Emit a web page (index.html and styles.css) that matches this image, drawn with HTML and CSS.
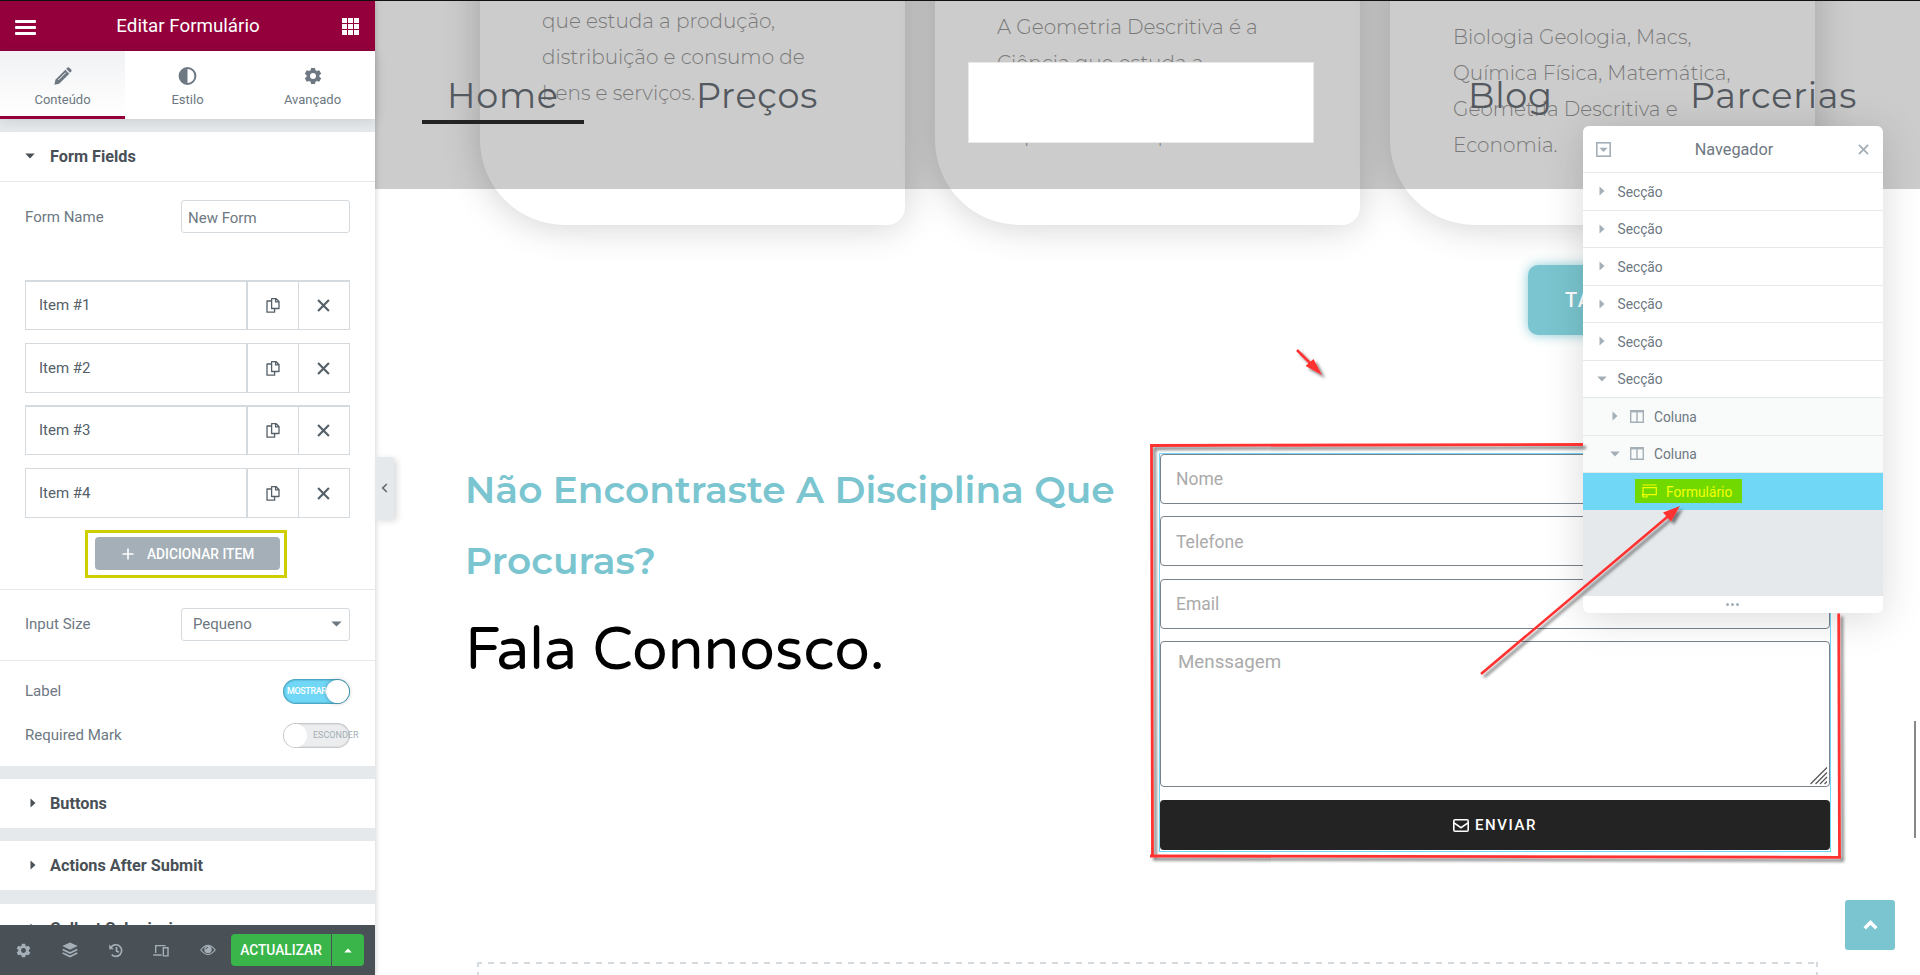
FILE: index.html
```html
<!DOCTYPE html>
<html lang="pt">
<head>
<meta charset="utf-8">
<title>Editar Formulário</title>
<link rel="stylesheet" href="styles.css">
</head>
<body>
<svg class="sprite" aria-hidden="true">
  <symbol id="copy" viewBox="0 0 14 15"><path d="M5.6.7h4.6l2.8 2.8v7H5.6zM9.6.7v3.2H13M5.4 3H1v11.2h7.6v-3.4" fill="none" stroke="currentColor" stroke-width="1.3" stroke-linejoin="round"/></symbol>
  <symbol id="cross" viewBox="0 0 12 12"><path d="M1 1l10 10M11 1L1 11" fill="none" stroke="currentColor" stroke-width="2"/></symbol>
  <symbol id="right" viewBox="0 0 6 10"><path d="M.5.5L5.5 5l-5 4.500z" fill="currentColor"/></symbol>
  <symbol id="down" viewBox="0 0 10 6"><path d="M.3.5h9.400L5 5.600z" fill="currentColor"/></symbol>
  <symbol id="cog" viewBox="0 0 20 20"><path fill-rule="evenodd" fill="currentColor" d="M7.800 1h4.400l.5 2.500 1.700 1 2.500-.9 2.200 3.800-2 1.700v1.800l2 1.700-2.200 3.800-2.500-.9-1.700 1-.5 2.500H7.800l-.5-2.500-1.700-1-2.500.9L.9 12.600l2-1.700V9.100l-2-1.700 2.200-3.800 2.500.9 1.700-1zM10 6.700a3.300 3.300 0 1 0 0 6.600 3.300 3.300 0 0 0 0-6.600z"/></symbol>
  <symbol id="column" viewBox="0 0 14 13"><path d="M.7 1.500h12.600M.7 1v11.300h12.600V1M7 2v10.400" fill="none" stroke="currentColor" stroke-width="1.400"/><path d="M0 0h14v2.200H0z" fill="currentColor"/></symbol>
</svg>

<div class="editor">
  <aside class="panel">
    <header class="panel-header">
      <span class="burger"><i></i><i></i><i></i></span>
      <h1>Editar Formulário</h1>
      <span class="apps"><i></i><i></i><i></i><i></i><i></i><i></i><i></i><i></i><i></i></span>
    </header>
    <nav class="tabs">
      <div class="tab active">
        <svg width="18" height="18" viewBox="0 0 18 18"><path fill="currentColor" d="M12.200 1.800l1-1.100q1-1 2.100 0l1.900 1.900q.9 1-.1 2.100l-1.100 1zM11.300 2.700l4 4L5.200 16.700.4 17.700l1-4.900z"/><path d="M4.300 13l7.400-7.400" stroke="#f7f8f9" stroke-width="1"/></svg>
        <span>Conteúdo</span>
      </div>
      <div class="tab">
        <svg width="19" height="18" viewBox="0 0 19 18"><circle cx="9.500" cy="9" r="7.900" fill="none" stroke="currentColor" stroke-width="2"/><path d="M9.500 1a8 8 0 0 0 0 16z" fill="currentColor"/></svg>
        <span>Estilo</span>
      </div>
      <div class="tab">
        <svg width="18" height="18"><use href="#cog"/></svg>
        <span>Avançado</span>
      </div>
    </nav>
    <div class="panel-body">
      <section class="group">
        <h2 class="open"><svg width="10" height="6"><use href="#down"/></svg>Form Fields</h2>
        <div class="control name"><label>Form Name</label><div class="field">New Form</div></div>
        <div class="items">
          <div class="item thick"><span>Item #1</span><b><svg width="14" height="15"><use href="#copy"/></svg></b><b><svg width="13" height="13" viewBox="0 0 12 12"><use href="#cross"/></svg></b></div>
          <div class="item"><span>Item #2</span><b><svg width="14" height="15"><use href="#copy"/></svg></b><b><svg width="13" height="13" viewBox="0 0 12 12"><use href="#cross"/></svg></b></div>
          <div class="item thick third"><span>Item #3</span><b><svg width="14" height="15"><use href="#copy"/></svg></b><b><svg width="13" height="13" viewBox="0 0 12 12"><use href="#cross"/></svg></b></div>
          <div class="item"><span>Item #4</span><b><svg width="14" height="15"><use href="#copy"/></svg></b><b><svg width="13" height="13" viewBox="0 0 12 12"><use href="#cross"/></svg></b></div>
        </div>
        <div class="add-frame"><div class="add"><svg width="12" height="12" viewBox="0 0 12 12"><path d="M6 .5v11M.5 6h11" stroke="#fff" stroke-width="1.600"/></svg>ADICIONAR ITEM</div></div>
        <div class="control size"><label>Input Size</label><div class="field select">Pequeno<svg width="11" height="6" viewBox="0 0 10 6" preserveAspectRatio="none"><use href="#down"/></svg></div></div>
        <div class="toggles">
          <div class="control"><label>Label</label><div class="switch on"><em>MOSTRAR</em><i></i></div></div>
          <div class="control"><label>Required Mark</label><div class="switch"><i></i><em>ESCONDER</em></div></div>
        </div>
      </section>
      <section class="group"><h2><svg width="6" height="10"><use href="#right"/></svg>Buttons</h2></section>
      <section class="group"><h2><svg width="6" height="10"><use href="#right"/></svg>Actions After Submit</h2></section>
      <section class="group last"><h2><svg width="6" height="10"><use href="#right"/></svg>Collect Submissions</h2></section>
    </div>
    <footer class="panel-footer">
      <div class="tools">
        <svg width="15" height="15"><use href="#cog"/></svg>
        <svg width="16" height="16" viewBox="0 0 16 16"><path fill="currentColor" d="M8 .5l7.700 3.600L8 7.700.3 4.100z"/><path d="M.7 7.500L8 11l7.300-3.500M.7 11L8 14.500l7.300-3.500" fill="none" stroke="currentColor" stroke-width="1.700"/></svg>
        <svg width="14" height="15" viewBox="0 0 14 15"><path d="M1.900 4.600A5.800 5.800 0 1 1 2.700 11.600M7.500 4v4l2.400 1.300" fill="none" stroke="currentColor" stroke-width="1.700"/><path d="M.2 1.500v4.700h4.700z" fill="currentColor"/></svg>
        <svg width="16" height="13" viewBox="0 0 16 13"><path d="M2.700 9V1.600h9.800M.3 11h8.300M10.300 3.700h4.700v8.200h-4.700z" fill="none" stroke="currentColor" stroke-width="1.400"/></svg>
        <svg width="16" height="12" viewBox="0 0 16 12"><path d="M.8 6Q8-3.500 15.200 6 8 15 .8 6z" fill="none" stroke="currentColor" stroke-width="1.200"/><circle cx="8" cy="5.500" r="3.700" fill="currentColor"/><path d="M6 5.200a2 2 0 0 1 1.900-1.800" fill="none" stroke="#495157"/></svg>
      </div>
      <div class="update"><span>ACTUALIZAR</span><b><svg class="flip" width="8" height="5" viewBox="0 0 10 6"><use href="#down"/></svg></b></div>
    </footer>
    <div class="collapse"><svg width="7" height="10" viewBox="0 0 7 10"><path d="M5.800 1L1.800 5l4 4" fill="none" stroke="#5f6a73" stroke-width="1.700"/></svg></div>
  </aside>

  <main class="preview">
    <div class="cards">
      <article class="card"><p>que estuda a produção,<br>distribuição e consumo de<br>bens e serviços.</p></article>
      <article class="card second"><p>A Geometria Descritiva é a<br>Ciência que estuda a<br>&nbsp;<br>duplo e num só plano</p></article>
      <article class="card third"><p>Biologia Geologia, Macs,<br>Química Física, Matemática,<br>Geometria Descritiva e<br>Economia.</p></article>
    </div>
    <nav class="site-nav">
      <a class="home">Home</a><a class="precos">Preços</a><span class="logo"></span><a class="blog">Blog</a><a class="parcerias">Parcerias</a>
    </nav>
    <div class="cta-row"><a class="cta">TABELA DE PREÇOS</a></div>
    <div class="contact">
      <div class="copy">
        <h2>Não Encontraste A Disciplina Que<br>Procuras?</h2>
        <h3>Fala Connosco.</h3>
      </div>
      <form class="form">
        <input placeholder="Nome"><input class="phone" placeholder="Telefone"><input class="email" placeholder="Email">
        <div class="message"><textarea placeholder="Menssagem"></textarea>
          <svg width="18" height="18" viewBox="0 0 18 18"><path d="M.5 17L17 .5M5.500 17L17 5.500M10 17l7-7M14.500 17l2.500-2.500" stroke="#555" stroke-width="1.200"/></svg>
        </div>
        <button type="button"><svg width="16" height="13" viewBox="0 0 16 13"><rect x=".8" y=".8" width="14.400" height="11.400" rx="1.300" fill="none" stroke="#fff" stroke-width="1.600"/><path d="M1 3.800l7 4.900 7-4.900" fill="none" stroke="#fff" stroke-width="1.600"/></svg>ENVIAR</button>
      </form>
    </div>
    <div class="drop-area"></div>
    <div class="to-top"><svg width="15" height="10" viewBox="0 0 15 10"><path d="M1.700 8.300l5.800-5.800 5.800 5.800" fill="none" stroke="#fff" stroke-width="3.400"/></svg></div>
    <div class="scroll-thumb"></div>
  </main>
</div>

<div class="navigator">
  <header><svg width="15" height="15" viewBox="0 0 15 15"><rect x=".8" y=".8" width="13.400" height="13.400" fill="none" stroke="currentColor" stroke-width="1.600"/><path d="M3.300 5.700h8.400L7.500 10z" fill="currentColor"/></svg><span>Navegador</span><svg width="11" height="11" viewBox="0 0 12 12"><use href="#cross"/></svg></header>
  <div class="row"><svg width="6" height="10"><use href="#right"/></svg><span>Secção</span></div>
  <div class="row"><svg width="6" height="10"><use href="#right"/></svg><span>Secção</span></div>
  <div class="row"><svg width="6" height="10"><use href="#right"/></svg><span>Secção</span></div>
  <div class="row"><svg width="6" height="10"><use href="#right"/></svg><span>Secção</span></div>
  <div class="row"><svg width="6" height="10"><use href="#right"/></svg><span>Secção</span></div>
  <div class="row wide"><svg width="10" height="6"><use href="#down"/></svg><span>Secção</span></div>
  <div class="row child"><svg width="6" height="10"><use href="#right"/></svg><svg class="col" width="14" height="13"><use href="#column"/></svg><span>Coluna</span></div>
  <div class="row child wide"><svg width="10" height="6"><use href="#down"/></svg><svg class="col" width="14" height="13"><use href="#column"/></svg><span>Coluna</span></div>
  <div class="selected"><div class="mark"><svg width="15" height="14" viewBox="0 0 15 14"><path d="M.5 1h14M1 13V3.700h13.300v7H6M.5 10.700H5V13H1z" fill="none" stroke="currentColor" stroke-width="1.200"/></svg><span>Formulário</span></div></div>
  <div class="empty"></div>
  <footer><i></i><i></i><i></i></footer>
</div>

<svg class="annotations" width="1920" height="975" viewBox="0 0 1920 975">
  <defs><filter id="soft" x="-5%" y="-5%" width="110%" height="110%"><feDropShadow dx="3" dy="3" stdDeviation="1.500" flood-color="#000" flood-opacity=".5"/></filter></defs>
  <g filter="url(#soft)" stroke="#ff3333" fill="#ff3333">
    <path d="M1150 445.500L1583 444.500M1151.500 447L1152.500 857M1150 856L1841 857.300M1838.700 613.500L1839.500 857" stroke-width="2.800" fill="none"/>
    <path d="M1481 674L1669 515.500M1297 350l14 14" stroke-width="2.600" fill="none"/>
    <path d="M1680 506l-17 6.500 8 9zM1322 375l-16.500-9 8-7z" stroke="none"/>
  </g>
</svg>
</body>
</html>
```
FILE: styles.css
```css
* { box-sizing: border-box; }
body { margin: 0; width: 1920px; height: 975px; overflow: hidden; position: relative; background: #fff; font-family: Roboto, "Liberation Sans", sans-serif; }
h1, h2, h3, p { margin: 0; }
svg { display: block; flex: none; }
.sprite { position: absolute; width: 0; height: 0; }
.editor { display: flex; height: 975px; border-top: 1px solid #111; }

/* editor panel */
.panel { width: 375px; flex: none; position: relative; z-index: 3; display: flex; flex-direction: column; background: #e6e9ec; box-shadow: 0 0 6px rgba(0,0,0,.22); }
.panel-header { height: 50px; flex: none; background: #93003c; display: flex; align-items: center; justify-content: space-between; padding: 0 15px; color: #fff; }
.panel-header h1 { font-size: 18.75px; font-weight: 400; padding-right: 2px; }
.burger { display: flex; flex-direction: column; gap: 3px; width: 21px; margin-top: 2px; }
.burger i { height: 3px; background: #fff; border-radius: 1px; }
.apps { display: grid; grid-template-columns: repeat(3, 5px); gap: 1px; width: 18px; }
.apps i { width: 5px; height: 5px; background: #fff; }
.tabs { height: 68px; flex: none; display: flex; background: #fff; box-shadow: 0 2px 12px rgba(0,0,0,.12); color: #6d7882; font-size: 13px; }
.tab { flex: 1; display: flex; flex-direction: column; align-items: center; padding-top: 16px; gap: 6px; border-bottom: 3px solid transparent; line-height: 17px; }
.tab.active { background: linear-gradient(#f1f2f4, #fff); border-bottom-color: #93003c; }
.panel-body { flex: 1; overflow: hidden; padding-top: 13px; }
.group { background: #fff; margin-bottom: 13px; overflow: hidden; }
.group.last { margin-top: 14px; }
.group h2 { height: 49px; display: flex; align-items: center; padding: 0 0 1px 30px; gap: 14px; font-size: 16.25px; font-weight: 700; color: #495157; }
.group h2.open { height: 50px; padding-left: 25px; gap: 15px; border-bottom: 1px solid #e6e9ec; }
.control { display: flex; justify-content: space-between; align-items: center; padding: 0 25px; color: #6d7882; font-size: 15px; }
.field { width: 169px; height: 33px; border: 1px solid #d5dadf; border-radius: 3px; padding: 2px 6px 0; line-height: 30px; }
.name { margin-top: 18px; }
.name label { padding-top: 1px; }
.items { margin: 47px 25px 0; display: flex; flex-direction: column; gap: 13px; }
.item { height: 50px; border: 1px solid #d5dadf; display: flex; color: #556068; font-size: 15px; }
.item.thick { border-top-width: 2px; }
.item.third { margin-top: -1px; }
.item span { flex: 1; padding-left: 13px; line-height: 49px; }
.item.thick span { line-height: 46px; }
.item b { width: 52px; border-left: 2px solid #d5dadf; display: flex; align-items: center; justify-content: center; padding-right: 1px; }
.item b + b { width: 51px; border-left-width: 1px; }
.add-frame { width: 202px; height: 48px; margin: 12px 0 0 85px; border: 3px solid #cfcf00; padding: 4px 4px 0 7px; }
.add { height: 33px; background: #a4afb7; border-radius: 4px; color: #fff; font-size: 13.75px; font-weight: 500; display: flex; align-items: center; gap: 13px; padding: 0 0 0 27px; }
.size { margin-top: 11px; height: 72px; border-top: 1px solid #e6e9ec; border-bottom: 1px solid #e6e9ec; align-items: flex-start; padding-top: 18px; line-height: 32px; }
.select { padding: 0 7px 1px 11px; display: flex; justify-content: space-between; align-items: center; }
.toggles { padding: 18px 0; display: flex; flex-direction: column; gap: 19px; height: 105px; }
.toggles .control { height: 25px; }
.toggles label { padding-bottom: 2px; }
.switch { width: 67px; height: 25px; border-radius: 13px; background: #ebedee; box-shadow: inset 0 0 2px 1px rgba(0,0,0,.2); display: flex; align-items: center; color: #a4afb7; font-size: 9px; }
.switch em { font-style: normal; white-space: nowrap; padding-bottom: 1px; }
.switch i { width: 23px; height: 23px; border-radius: 50%; background: #fff; margin: 0 6px 0 1px; flex: none; }
.switch.on { background: #71d7f7; color: #fff; font-weight: 500; padding-left: 4px; letter-spacing: -.4px; box-shadow: inset 0 0 2px 1px rgba(0,70,90,.45); }
.switch.on em { width: 39px; overflow: hidden; }
.switch.on i { margin: 0; box-shadow: 0 0 4px rgba(0,0,0,.3); }
.panel-footer { height: 50px; flex: none; background: #495157; display: flex; justify-content: space-between; align-items: center; padding: 0 11px 0 16px; color: #a4afb7; }
.tools { width: 200px; display: flex; justify-content: space-between; align-items: center; }
.update { display: flex; width: 133px; height: 32px; background: #39b54a; border-radius: 4px; color: #fff; font-size: 13.75px; font-weight: 500; line-height: 32px; text-align: center; }
.update span { flex: 1; }
.update b { width: 33px; border-left: 1px solid #495157; display: flex; align-items: center; justify-content: center; }
.flip { transform: rotate(180deg); }
.collapse { position: absolute; left: 375px; top: 456px; width: 19px; height: 62px; background: #e6e9ec; border-radius: 0 3px 3px 0; box-shadow: 3px 2px 6px rgba(0,0,0,.15); display: flex; align-items: center; justify-content: center; }

/* page preview */
.preview { flex: 1; position: relative; height: 974px; overflow: hidden; }
.cards { display: flex; gap: 30px; height: 224px; padding-left: 105px; }
.card { width: 425px; flex: none; height: 324px; margin-top: -100px; padding: 102px 0 0 62px; background: #fff; border-radius: 20px 20px 18px 85px; box-shadow: 0 0 38px rgba(0,0,0,.2); font: 300 20px/36px Montserrat, Inter, "Open Sans", sans-serif; color: #989898; white-space: nowrap; }
.card.second { padding-top: 108px; }
.card.third { padding: 118px 0 0 63px; }
.site-nav { position: absolute; left: 0; top: 0; width: 1545px; height: 188px; background: rgba(0,0,0,.2); display: flex; font: 400 35px/50px Montserrat, Inter, "Open Sans", sans-serif; letter-spacing: .75px; color: #54595f; padding: 61px 0 0 47px; }
.site-nav a { height: 62px; padding-top: 9px; flex: none; white-space: nowrap; }
.site-nav .home { width: 162px; border-bottom: 4px solid #232323; padding-left: 25px; }
.site-nav .precos { width: 384px; padding-left: 112px; }
.logo { width: 346px; height: 81px; flex: none; background: #fff; border: 1px solid #e8e8e8; }
.site-nav .blog { width: 376px; padding-left: 154px; }
.cta-row { padding: 40px 0 0 1153px; height: 110px; }
.cta { display: block; width: 286px; height: 70px; border-radius: 10px; background: #7ac5cf; box-shadow: 0 0 12px rgba(122,197,207,.9); color: #fff; font: 500 20px/71px Roboto, sans-serif; letter-spacing: 1.500px; padding-left: 37px; white-space: nowrap; }
.contact { display: flex; justify-content: space-between; padding: 118px 89px 0 90px; height: 517px; }
.copy { padding-top: 1px; }
.copy h2 { font: 600 37.500px/71px Montserrat, Inter, "Open Sans", sans-serif; color: #7ac5cf; white-space: nowrap; }
.copy h3 { font: 400 58.750px/80px "Varela Round", Lato, sans-serif; color: #000; margin-top: 15px; }
.form { width: 672px; height: 399px; border: 1px solid #71d7f7; display: flex; flex-direction: column; gap: 12px; }
.form input, .form textarea { width: 670px; height: 50px; flex: none; border: 1px solid #7a828a; border-radius: 4px; background: #fff; font: 400 17.500px Roboto, sans-serif; padding: 0 15px; margin: 0; outline: 0; display: block; }
.form .phone { padding-top: 2px; }
.form .email { margin-top: 1px; }
.form textarea { height: 146px; padding: 9px 17px; resize: none; font-size: 18.750px; }
.form ::placeholder { color: #aaa; opacity: 1; }
.message { position: relative; height: 146px; flex: none; }
.message svg { position: absolute; right: 2px; bottom: 2px; }
.form button { height: 50px; margin-top: 1px; border: 0; border-radius: 4px; background: #232323; color: #fff; font: 500 15px Roboto, sans-serif; letter-spacing: 1.600px; display: flex; align-items: center; justify-content: center; gap: 6px; flex: none; }
.drop-area { margin: 110px 0 0 102px; width: 1341px; height: 60px; background: repeating-linear-gradient(90deg, #d5dadf 0 6px, transparent 6px 12px) -1px 0 / 1341px 2px no-repeat, repeating-linear-gradient(#d5dadf 0 5px, transparent 5px 10px) 0 0 / 2px 60px no-repeat, repeating-linear-gradient(#d5dadf 0 5px, transparent 5px 10px) 100% 0 / 2px 60px no-repeat; }
.to-top { position: absolute; left: 1470px; top: 899px; width: 50px; height: 50px; background: #7ac5cf; border-radius: 3px; display: flex; align-items: center; justify-content: center; }
.scroll-thumb { position: absolute; left: 1539px; top: 720px; width: 2px; height: 117px; background: #888; }

/* floating navigator */
.navigator { position: absolute; left: 1583px; top: 126px; width: 300px; height: 487px; z-index: 5; background: #fff; border-radius: 6px; box-shadow: 0 5px 40px rgba(0,0,0,.15); color: #6d7882; font-size: 13.750px; }
.navigator header { height: 47px; border-bottom: 1px solid #e6e9ec; display: flex; align-items: center; justify-content: space-between; padding: 0 14px 0 13px; color: #a4afb7; }
.navigator header span { font-size: 16.250px; color: #6d7882; padding-right: 1px; }
.row { height: 37.500px; border-bottom: 1px solid #e6e9ec; display: flex; align-items: center; padding-left: 16px; gap: 12.500px; line-height: 18px; }
.row span { padding-top: 1px; }
.row svg { color: #a4afb7; }
.row.wide { padding-left: 14px; gap: 10.500px; }
.row.child { padding-left: 29px; background: #f9fafa; }
.row.child.wide { padding-left: 27px; }
.row .col { margin: 0 -2px 0 -1px; }
.row.wide .col { margin: 0 0 0 -1px; }
.selected { height: 37px; background: #71d7f7; padding: 6px 0 0 52px; }
.mark { width: 107px; height: 24px; background: #72d900; color: #f4ff00; display: flex; align-items: center; gap: 9px; padding-left: 7px; }
.mark span { padding-top: 1px; }
.empty { height: 86px; background: #e6e9ec; }
.navigator footer { display: flex; justify-content: center; gap: 2px; padding: 7px 2px 0 0; }
.navigator footer i { width: 3px; height: 3px; border-radius: 50%; background: #a4afb7; }
.annotations { position: absolute; left: 0; top: 0; z-index: 6; pointer-events: none; }
```
